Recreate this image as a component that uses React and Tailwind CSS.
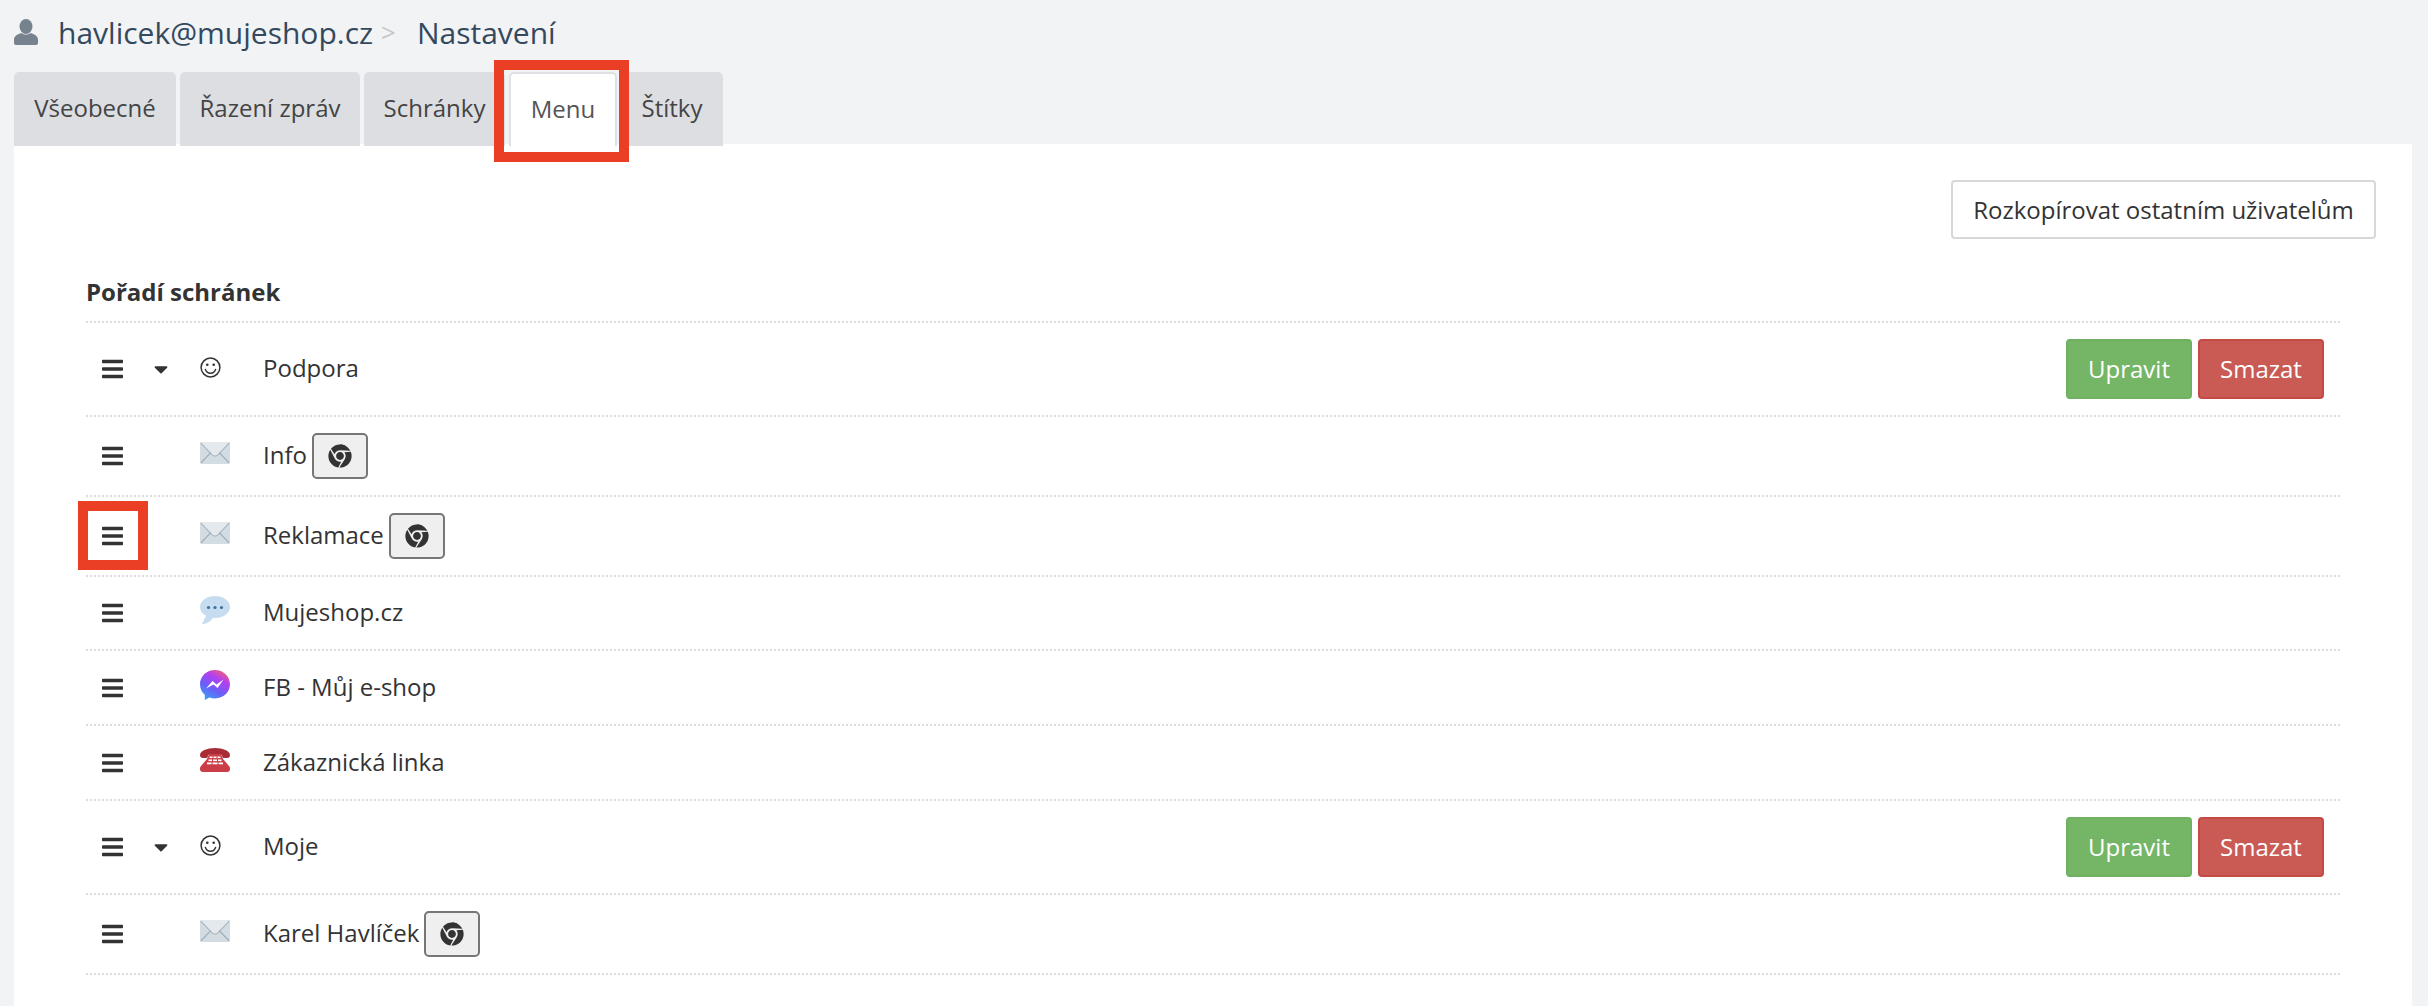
import React from "react";
import { FaBars, FaCaretDown, FaChrome } from "react-icons/fa";

const Smiley = () => (
  <svg viewBox="0 0 21 21" className="w-[21px] h-[21px] -mt-[4px]" fill="none" stroke="#333" strokeWidth="1.5">
    <circle cx="10.5" cy="10.5" r="9.4" />
    <circle cx="7.3" cy="7.8" r="1.3" fill="#333" stroke="none" />
    <circle cx="13.7" cy="7.8" r="1.3" fill="#333" stroke="none" />
    <path d="M5.4 12.4c1 2.6 3 3.8 5.1 3.8s4.1-1.2 5.1-3.8" strokeLinecap="round" />
  </svg>
);

const Envelope = () => (
  <svg viewBox="0 0 30 22" className="w-[30px] h-[22px] -mt-[6px]">
    <rect width="30" height="22" rx="2" fill="#d2dce2" />
    <path d="M0 2a2 2 0 0 1 2-2h26a2 2 0 0 1 2 2L18 13.5c-1.6 1.6-4.4 1.6-6 0z" fill="#e3e9ed" />
    <path d="M.6 1 12 12.8c1.6 1.7 4.4 1.7 6 0L29.4 1" fill="none" stroke="#aab7c0" strokeWidth="1.2" />
    <path d="M.8 21 10.8 10.5M29.2 21 19.2 10.5" fill="none" stroke="#a3b1bb" strokeWidth="1.2" />
  </svg>
);

const Bubble = () => (
  <svg viewBox="0 0 30 28" className="w-[30px] h-[28px] -mt-[6px]">
    <ellipse cx="15" cy="11" rx="15" ry="11" fill="#c5dcf1" />
    <path d="M7 18 2 28c4 0 8-2 11-6z" fill="#c5dcf1" />
    <circle cx="8.5" cy="11.5" r="1.6" fill="#3f6f9f" />
    <circle cx="15" cy="11.5" r="1.6" fill="#3f6f9f" />
    <circle cx="21.5" cy="11.5" r="1.6" fill="#3f6f9f" />
  </svg>
);

const Messenger = () => (
  <svg viewBox="0 0 30 30" className="w-[30px] h-[30px] -mt-[6px]">
    <defs>
      <linearGradient id="msg" x1="0.25" y1="1" x2="0.8" y2="0">
        <stop offset="0" stopColor="#3d9df5" />
        <stop offset="0.35" stopColor="#6a5ff8" />
        <stop offset="0.7" stopColor="#b43ff0" />
        <stop offset="1" stopColor="#f5646f" />
      </linearGradient>
    </defs>
    <path d="M15 0C6.600 0 0 6.200 0 14.300c0 4.300 1.800 8 4.800 10.500V30l4.600-2.500c1.700.6 3.600.9 5.600.9 8.400 0 15-6.200 15-14.100S23.400 0 15 0z" fill="url(#msg)" />
    <path d="M6 18.500 12.500 11l4 3.500L23.500 9.500 17.500 18l-4-3.500z" fill="#fff" />
  </svg>
);

const Phone = () => (
  <svg viewBox="0 0 30 24" className="w-[30px] h-[24px] -mt-[6px]">
    <path d="M0 7C0 3 7 0 15 0s15 3 15 7c0 2-1 3-3 3h-3c-1.500 0-2-1-2-3-2-1-12-1-14 0 0 2-.5 3-2 3H3C1 10 0 9 0 7z" fill="#a92b35" />
    <path d="M9 6h12l2 5 6 7c1 1 1 2 1 3 0 2-1 3-3 3H3c-2 0-3-1-3-3 0-1 0-2 1-3l6-7z" fill="#cc3e47" />
    <g fill="#fff">
      <rect x="9.500" y="8.500" width="3" height="1.600" /><rect x="13.500" y="8.500" width="3" height="1.600" /><rect x="17.500" y="8.500" width="3" height="1.600" />
      <rect x="8.500" y="11.500" width="3.500" height="1.600" /><rect x="13" y="11.500" width="4" height="1.600" /><rect x="18" y="11.500" width="3.500" height="1.600" />
      <rect x="7" y="14.500" width="4.500" height="1.800" /><rect x="12.500" y="14.500" width="5" height="1.800" /><rect x="18.500" y="14.500" width="4.500" height="1.800" />
    </g>
  </svg>
);

const UserIcon = () => (
  <svg viewBox="0 0 24 26" className="w-[24px] h-[26px]" fill="#76838f">
    <ellipse cx="12" cy="7.500" rx="6.500" ry="7.500" />
    <path d="M0 21c0-4 3-5.500 7.500-7 2.500 2 6.500 2 9 0C21 15.500 24 17 24 21v3c0 1-1 2-2 2H2c-1 0-2-1-2-2z" />
  </svg>
);

const rows = [
  { name: "Podpora", icon: <Smiley />, h: "h-[94px]", group: true },
  { name: "Info", icon: <Envelope />, h: "h-[80px]", chrome: true },
  { name: "Reklamace", icon: <Envelope />, h: "h-[80px]", chrome: true, mark: true },
  { name: "Mujeshop.cz", icon: <Bubble />, h: "h-[74px]" },
  { name: "FB - Můj e-shop", icon: <Messenger />, h: "h-[75px]" },
  { name: "Zákaznická linka", icon: <Phone />, h: "h-[75px]" },
  { name: "Moje", icon: <Smiley />, h: "h-[94px]", group: true },
  { name: "Karel Havlíček", icon: <Envelope />, h: "h-[80px]", chrome: true },
];

const tabs = [
  { label: "Všeobecné", w: "w-[162px]" },
  { label: "Řazení zpráv", w: "w-[180px]" },
  { label: "Schránky", w: "w-[141px]" },
  { label: "Menu", w: "w-[108px]", active: true },
  { label: "Štítky", w: "w-[102px]" },
];

function Row({ r }) {
  return (
    <div className={`flex items-center ${r.h} border-b-2 border-dotted border-[#dcdcdc] pl-[16px] pr-[16px] text-[24px] text-[#333]`}>
      <div className="relative w-[52px] shrink-0 flex items-center">
        <FaBars className="w-[21px] h-[24px] text-[#333]" />
        {r.mark && <div className="absolute -left-[24px] -top-[23px] w-[70px] h-[69px] border-[10px] border-[#ea3f25]" />}
      </div>
      <div className="w-[46px] shrink-0 flex items-center">
        {r.group && <FaCaretDown className="w-[14px] h-[22px] text-[#333]" />}
      </div>
      <div className="w-[63px] shrink-0 flex items-center">{r.icon}</div>
      <span className="-mt-[2px]">{r.name}</span>
      {r.chrome && (
        <button className="ml-[5px] w-[56px] h-[46px] flex items-center justify-center bg-[#efefef] border-2 border-[#767676] rounded-[5px]">
          <FaChrome className="w-[24px] h-[24px] text-[#333]" />
        </button>
      )}
      {r.group && (
        <div className="ml-auto flex gap-[6px]">
          <button className="w-[126px] h-[60px] rounded-[4px] bg-[#74b566] border-2 border-[#6fb15f] text-white">Upravit</button>
          <button className="w-[126px] h-[60px] rounded-[4px] bg-[#c95b54] border-2 border-[#c44a43] text-white">Smazat</button>
        </div>
      )}
    </div>
  );
}

export default function App() {
  return (
    <div className="relative min-h-[1006px] bg-[#f2f3f5] overflow-hidden font-['Open_Sans',sans-serif]">
      <div className="h-[72px] flex items-center pl-[14px] pb-[8px]">
        <UserIcon />
        <span className="ml-[20px] text-[30px] text-[#34495e]">havlicek@mujeshop.cz</span>
        <span className="ml-[8px] text-[26px] text-[#c4c6c9]">&gt;</span>
        <span className="ml-[21px] text-[30px] text-[#34495e]">Nastavení</span>
      </div>
      <div className="relative z-10 flex gap-[4px] pl-[14px] -mb-[2px] h-[74px]">
        {tabs.map((t) => (
          <div
            key={t.label}
            className={`${t.w} h-full flex items-center justify-center rounded-t-[5px] text-[24px] pb-[2px] text-[#444] ${
              t.active ? "bg-white border-2 border-b-0 border-[#e0e1e4] text-[#555]" : "bg-[#dcdee2]"
            }`}
          >
            {t.label}
          </div>
        ))}
      </div>
      <div className="absolute left-[494px] top-[60px] w-[135px] h-[102px] border-[10px] border-[#ea3f25] z-20" />
      <div className="ml-[14px] mr-[16px] bg-white h-[862px] pt-[36px] px-[72px]">
        <div className="flex justify-end -mr-[36px]">
          <button className="w-[425px] h-[59px] bg-white border-2 border-[#d8d8d8] rounded-[4px] text-[24px] text-[#333]">
            Rozkopírovat ostatním uživatelům
          </button>
        </div>
        <div className="h-[82px] flex items-end pb-[11px] text-[24px] font-bold text-[#333]">Pořadí schránek</div>
        <div className="border-t-2 border-dotted border-[#dcdcdc]">
          {rows.map((r) => (
            <Row key={r.name} r={r} />
          ))}
        </div>
      </div>
    </div>
  );
}
